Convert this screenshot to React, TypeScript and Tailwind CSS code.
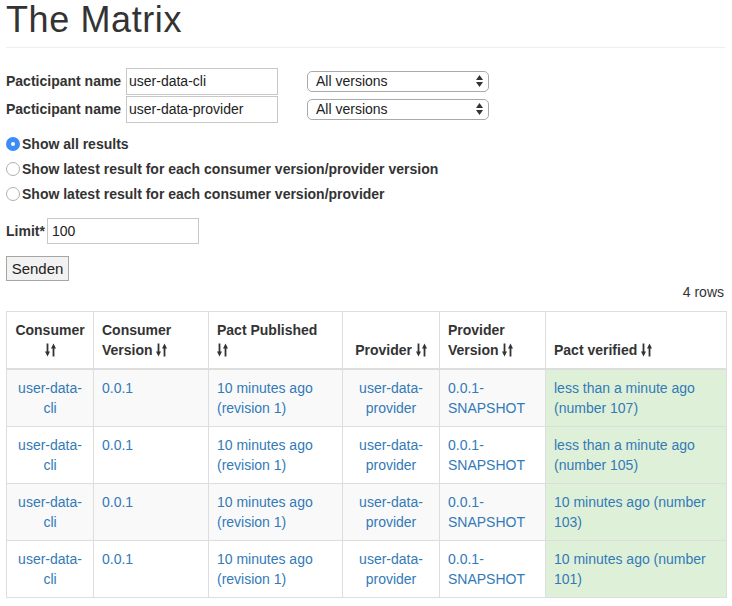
import React from "react";

const ROWS = [
  { verified: "less than a minute ago (number 107)" },
  { verified: "less than a minute ago (number 105)" },
  { verified: "10 minutes ago (number 103)" },
  { verified: "10 minutes ago (number 101)" },
];

function SortIcon() {
  return (
    <svg width="11" height="14" viewBox="0 0 11 14" className="inline-block align-[-2px]">
      <rect x="1.6" y="0.5" width="1.8" height="9" fill="#333" />
      <path d="M0 8.5 L5 8.5 L2.5 13.5 Z" fill="#333" />
      <rect x="7.6" y="4.5" width="1.8" height="9" fill="#333" />
      <path d="M6 5.5 L11 5.5 L8.5 0.5 Z" fill="#333" />
    </svg>
  );
}

function VersionSelect() {
  return (
    <div className="relative w-[182px] h-[21px] border border-[#a9a9a9] rounded-[5px] bg-white flex items-center pl-[8px] text-[14px] text-[#222]">
      All versions
      <span className="absolute right-[5px] top-[3px] flex flex-col items-center gap-[2px]">
        <svg width="7" height="5" viewBox="0 0 7 5"><path d="M0 5 L3.5 0 L7 5 Z" fill="#333" /></svg>
        <svg width="7" height="5" viewBox="0 0 7 5"><path d="M0 0 L3.5 5 L7 0 Z" fill="#333" /></svg>
      </span>
    </div>
  );
}

function Radio({ checked, label }: { checked?: boolean; label: string }) {
  return (
    <label className="flex items-center h-[25px] font-bold">
      {checked ? (
        <span className="w-[14px] h-[14px] rounded-full bg-[#3b8cf5] flex items-center justify-center mr-[2px]">
          <span className="w-[4px] h-[4px] rounded-full bg-white" />
        </span>
      ) : (
        <span className="w-[14px] h-[14px] rounded-full border border-[#b0b0b0] bg-white mr-[2px]" />
      )}
      {label}
    </label>
  );
}

export default function App() {
  return (
    <div className="pl-[6px] pr-[7px] text-[14px] leading-[20px] text-[#333] bg-white min-h-screen font-['Liberation_Sans',Arial,sans-serif]">
      <h1 className="pt-[2px] text-[36px] leading-[36px] font-medium tracking-[0.6px]">The Matrix</h1>
      <hr className="mt-[9px] border-0 border-t border-[#eee]" />

      {/* Participants */}
      <div className="mt-[19px] flex flex-col">
        {["user-data-cli", "user-data-provider"].map((name) => (
          <div key={name} className="flex items-center h-[28px]">
            <span className="font-bold w-[120px]">Pacticipant name</span>
            <div className="w-[152px] h-[27px] border border-[#c8c8c8] flex items-center pl-[2px] text-[#222]">
              {name}
            </div>
            <div className="ml-[29px]">
              <VersionSelect />
            </div>
          </div>
        ))}
      </div>

      {/* Radios */}
      <div className="mt-[8px] flex flex-col">
        <Radio checked label="Show all results" />
        <Radio label="Show latest result for each consumer version/provider version" />
        <Radio label="Show latest result for each consumer version/provider" />
      </div>

      {/* Limit */}
      <div className="mt-[12px] flex items-center">
        <span className="font-bold mr-[2px]">Limit*</span>
        <div className="w-[152px] h-[26px] border border-[#c8c8c8] flex items-center pl-[4px] text-[#222]">100</div>
      </div>

      <button className="mt-[12px] h-[25px] w-[63px] border border-[#a6a6a6] bg-[#f2f2f2] text-[15px] text-[#222] flex items-center justify-center">
        Senden
      </button>

      <div className="text-right mt-[1px] pr-[1px]">4 rows</div>

      <table className="mt-[9px] w-[720px] table-fixed border-collapse border border-[#ddd]">
        <colgroup>
          <col className="w-[87px]" />
          <col className="w-[115px]" />
          <col className="w-[134px]" />
          <col className="w-[97px]" />
          <col className="w-[106px]" />
          <col className="w-[181px]" />
        </colgroup>
        <thead>
          <tr className="font-bold">
            <th className="border border-[#ddd] border-b-2 p-[8px] align-bottom text-center font-bold">
              Consumer<br /><SortIcon />
            </th>
            <th className="border border-[#ddd] border-b-2 p-[8px] align-bottom text-left font-bold">
              Consumer<br />Version <SortIcon />
            </th>
            <th className="border border-[#ddd] border-b-2 p-[8px] align-bottom text-left font-bold">
              Pact Published<br /><SortIcon />
            </th>
            <th className="border border-[#ddd] border-b-2 p-[8px] align-bottom text-center font-bold whitespace-nowrap">
              Provider <SortIcon />
            </th>
            <th className="border border-[#ddd] border-b-2 p-[8px] align-bottom text-left font-bold">
              Provider<br />Version <SortIcon />
            </th>
            <th className="border border-[#ddd] border-b-2 p-[8px] align-bottom text-left font-bold">
              Pact verified <SortIcon />
            </th>
          </tr>
        </thead>
        <tbody className="text-[#337ab7]">
          {ROWS.map((r, i) => (
            <tr key={i} className={i % 2 === 0 ? "bg-[#f9f9f9]" : "bg-white"}>
              <td className="border border-[#ddd] p-[8px] align-top text-center">user-data-cli</td>
              <td className="border border-[#ddd] p-[8px] align-top">0.0.1</td>
              <td className="border border-[#ddd] p-[8px] align-top">10 minutes ago (revision 1)</td>
              <td className="border border-[#ddd] p-[8px] align-top text-center">user-data-provider</td>
              <td className="border border-[#ddd] p-[8px] align-top">0.0.1-SNAPSHOT</td>
              <td className="border border-[#ddd] p-[8px] align-top bg-[#dff0d8]">{r.verified}</td>
            </tr>
          ))}
        </tbody>
      </table>
    </div>
  );
}
